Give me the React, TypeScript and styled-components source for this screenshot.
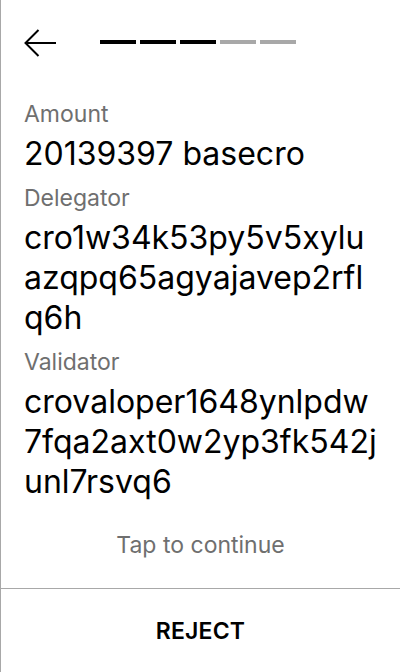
import React from "react";
import styled, { createGlobalStyle } from "styled-components";

const Global = createGlobalStyle`
  html, body { margin: 0; padding: 0; background: #fff; }
  body { font-family: Inter, "Noto Sans", sans-serif; -webkit-font-smoothing: antialiased; }
  * { box-sizing: border-box; }
`;

const Screen = styled.div`
  width: 400px;
  height: 672px;
  border-left: 1px solid #a8a8a8;
  display: flex;
  flex-direction: column;
  background: #fff;
  color: #000;
`;

const Header = styled.div`
  height: 86px;
  display: flex;
  align-items: center;
  padding-left: 23px;
  gap: 44px;
`;

const BackButton = styled.button`
  width: 32px;
  height: 32px;
  padding: 0;
  border: none;
  background: none;
  display: flex;
  align-items: center;
  justify-content: center;
`;

const Progress = styled.div`
  display: flex;
  gap: 4px;
  margin-top: -2px;
`;

const Step = styled.div<{ $done: boolean }>`
  width: 36px;
  height: 4px;
  background: ${(p) => (p.$done ? "#000" : "#a8a8a8")};
`;

const Content = styled.div`
  padding: 12px 16px 0 23px;
  display: flex;
  flex-direction: column;
  gap: 8px;
`;

const Item = styled.div`
  display: flex;
  flex-direction: column;
  gap: 4px;
`;

const Label = styled.div`
  font-size: 23px;
  line-height: 32px;
  color: #6f6f6f;
`;

const Value = styled.div`
  font-size: 32px;
  line-height: 40px;
  color: #000;
  white-space: nowrap;
`;

const ValueLine = styled.span`
  display: block;
`;

const TapHint = styled.div`
  margin-top: auto;
  padding-bottom: 27px;
  text-align: center;
  font-size: 23px;
  line-height: 32px;
  color: #6f6f6f;
`;

const Footer = styled.div`
  height: 84px;
  border-top: 1px solid #a8a8a8;
  display: flex;
  align-items: center;
  justify-content: center;
  font-size: 23px;
  font-weight: 600;
  letter-spacing: 0.2px;
`;

const items = [
  { label: "Amount", lines: ["20139397 basecro"] },
  { label: "Delegator", lines: ["cro1w34k53py5v5xylu", "azqpq65agyajavep2rfl", "q6h"] },
  {
    label: "Validator",
    lines: ["crovaloper1648ynlpdw", "7fqa2axt0w2yp3fk542j", "unl7rsvq6"],
  },
];

export default function App() {
  return (
    <>
      <Global />
      <Screen>
        <Header>
          <BackButton aria-label="Back">
            <svg width="32" height="32" viewBox="0 0 32 32" fill="none">
              <path d="M14.5 3 L1.5 16 L14.5 29 M1.5 16 H32" stroke="#000" strokeWidth="2" />
            </svg>
          </BackButton>
          <Progress>
            {[0, 1, 2, 3, 4].map((i) => (
              <Step key={i} $done={i < 3} />
            ))}
          </Progress>
        </Header>
        <Content>
          {items.map((it) => (
            <Item key={it.label}>
              <Label>{it.label}</Label>
              <Value>
                {it.lines.map((l) => (
                  <ValueLine key={l}>{l}</ValueLine>
                ))}
              </Value>
            </Item>
          ))}
        </Content>
        <TapHint>Tap to continue</TapHint>
        <Footer>REJECT</Footer>
      </Screen>
    </>
  );
}
